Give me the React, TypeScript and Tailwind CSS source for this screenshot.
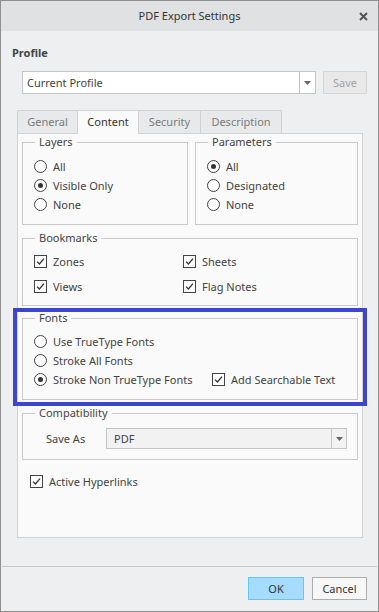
import React from "react";

function Radio({ checked }: { checked?: boolean }) {
  return (
    <span className="flex h-[13px] w-[13px] shrink-0 items-center justify-center rounded-full border border-[#444] bg-white">
      {checked && <span className="h-[5px] w-[5px] rounded-full bg-[#333]" />}
    </span>
  );
}

function Check() {
  return (
    <span className="flex h-[13px] w-[13px] shrink-0 items-center justify-center border border-[#444] bg-white">
      <svg width="9" height="9" viewBox="0 0 9 9" fill="none">
        <path d="M1 4.6 L3.4 7 L8 1.6" stroke="#333" strokeWidth="1.3" />
      </svg>
    </span>
  );
}

function RadioRow({ label, checked }: { label: string; checked?: boolean }) {
  return (
    <div className="flex h-[19px] items-center">
      <Radio checked={checked} />
      <span className="ml-[6px]">{label}</span>
    </div>
  );
}

function CheckRow({ label }: { label: string }) {
  return (
    <div className="flex h-[25px] items-center">
      <Check />
      <span className="ml-[6px]">{label}</span>
    </div>
  );
}

function Caret() {
  return (
    <svg width="7" height="4" viewBox="0 0 7 4">
      <path d="M0 0 H7 L3.5 4 Z" fill="#666" />
    </svg>
  );
}

export default function App() {
  return (
    <div
      className="flex h-[612px] w-[379px] flex-col border border-[#8f8f8f] bg-[#eeeff1] text-[11px] leading-[16px] text-[#444]"
      style={{ fontFamily: '"Noto Sans", "Open Sans", sans-serif' }}
    >
      {/* Title bar */}
      <div className="grid h-[30px] shrink-0 grid-cols-[1fr_auto_1fr] items-center bg-[#dfe1e3] text-[#333]">
        <span />
        <span>PDF Export Settings</span>
        <span className="flex justify-end pr-[10px]">
          <svg width="9" height="9" viewBox="0 0 9 9">
            <path d="M1 1 L8 8 M8 1 L1 8" stroke="#555" strokeWidth="2" />
          </svg>
        </span>
      </div>

      <div className="flex flex-1 flex-col pl-[11px] pr-[11px]">
        <div className="mt-[14px] font-bold text-[#444]">Profile</div>

        <div className="mt-[10px] flex items-center">
          <div className="ml-[10px] flex h-[23px] w-[294px] items-center border border-[#c4c4c4] bg-white">
            <span className="flex-1 pl-[4px]">Current Profile</span>
            <span className="flex h-full w-[16px] items-center justify-center border-l border-[#c4c4c4]">
              <Caret />
            </span>
          </div>
          <button className="ml-[7px] h-[23px] w-[44px] border border-[#d6d6d6] bg-[#e9e9ea] text-[#a3a3a3]">
            Save
          </button>
        </div>

        {/* Tabs */}
        <div className="ml-[5px] mt-[16px] flex h-[23px] items-end">
          <div className="flex h-[23px] w-[61px] items-center justify-center border border-b-0 border-[#d2d2d2] bg-[#e8e9eb] text-[#7a7a7a]">
            General
          </div>
          <div className="relative z-10 -mb-px flex h-[24px] w-[61px] items-center justify-center border-r border-t border-[#d2d2d2] bg-[#fafafa] pb-px text-[#333]">
            Content
          </div>
          <div className="flex h-[23px] w-[62px] items-center justify-center border-r border-t border-[#d2d2d2] bg-[#e8e9eb] text-[#7a7a7a]">
            Security
          </div>
          <div className="flex h-[23px] w-[81px] items-center justify-center border-r border-t border-[#d2d2d2] bg-[#e8e9eb] text-[#7a7a7a]">
            Description
          </div>
        </div>

        {/* Tab panel */}
        <div className="ml-[5px] flex h-[405px] w-[346px] flex-col border border-[#d2d2d2] bg-[#fafafa] px-[4px]">
          <div className="flex gap-[7px]">
            <fieldset className="h-[91px] w-[166px] border border-[#c9c9c9] pl-[11px]">
              <legend className="ml-px px-[4px]">Layers</legend>
              <div className="pt-[7px]">
                <RadioRow label="All" />
                <RadioRow label="Visible Only" checked />
                <RadioRow label="None" />
              </div>
            </fieldset>
            <fieldset className="h-[91px] w-[163px] border border-[#c9c9c9] pl-[11px]">
              <legend className="ml-px px-[4px]">Parameters</legend>
              <div className="pt-[7px]">
                <RadioRow label="All" checked />
                <RadioRow label="Designated" />
                <RadioRow label="None" />
              </div>
            </fieldset>
          </div>

          <fieldset className="mt-[5px] h-[76px] border border-[#c9c9c9] pl-[11px]">
            <legend className="ml-px px-[4px]">Bookmarks</legend>
            <div className="grid grid-cols-[149px_1fr] pt-[3px]">
              <CheckRow label="Zones" />
              <CheckRow label="Sheets" />
              <CheckRow label="Views" />
              <CheckRow label="Flag Notes" />
            </div>
          </fieldset>

          <div className="relative mt-[4px]">
            <fieldset className="h-[90px] border border-[#c9c9c9] pl-[11px]">
              <legend className="ml-px px-[4px]">Fonts</legend>
              <div className="pt-[6px]">
                <RadioRow label="Use TrueType Fonts" />
                <RadioRow label="Stroke All Fonts" />
                <div className="flex h-[19px] items-center">
                  <div className="flex w-[178px] items-center">
                    <Radio checked />
                    <span className="ml-[6px]">Stroke Non TrueType Fonts</span>
                  </div>
                  <Check />
                  <span className="ml-[6px]">Add Searchable Text</span>
                </div>
              </div>
            </fieldset>
            <div className="pointer-events-none absolute -bottom-[6px] -left-[9px] -right-[9px] -top-[2px] border-4 border-[#3c46cc]" />
          </div>

          <fieldset className="mt-[5px] h-[55px] border border-[#c9c9c9] pl-[11px]">
            <legend className="ml-px px-[4px]">Compatibility</legend>
            <div className="mt-[7px] flex items-center">
              <span className="ml-[12px] w-[60px]">Save As</span>
              <div className="flex h-[21px] w-[241px] items-center border border-[#c4c4c4] bg-[#f2f2f2]">
                <span className="flex-1 pl-[7px]">PDF</span>
                <span className="flex h-full w-[15px] items-center justify-center border-l border-[#c4c4c4]">
                  <Caret />
                </span>
              </div>
            </div>
          </fieldset>

          <div className="ml-[8px] mt-[12px] flex h-[19px] items-center">
            <Check />
            <span className="ml-[6px]">Active Hyperlinks</span>
          </div>
        </div>

        <div className="-ml-[10px] -mr-[10px] mt-[28px] h-px bg-[#c8c8c8]" />

        <div className="mt-[10px] flex justify-end gap-[8px]">
          <button className="h-[23px] w-[56px] border border-[#6cc3f5] bg-[#a6dcff] text-[#333]">OK</button>
          <button className="h-[23px] w-[55px] border border-[#adadad] bg-[#f7f7f7] text-[#333]">Cancel</button>
        </div>
      </div>
    </div>
  );
}
